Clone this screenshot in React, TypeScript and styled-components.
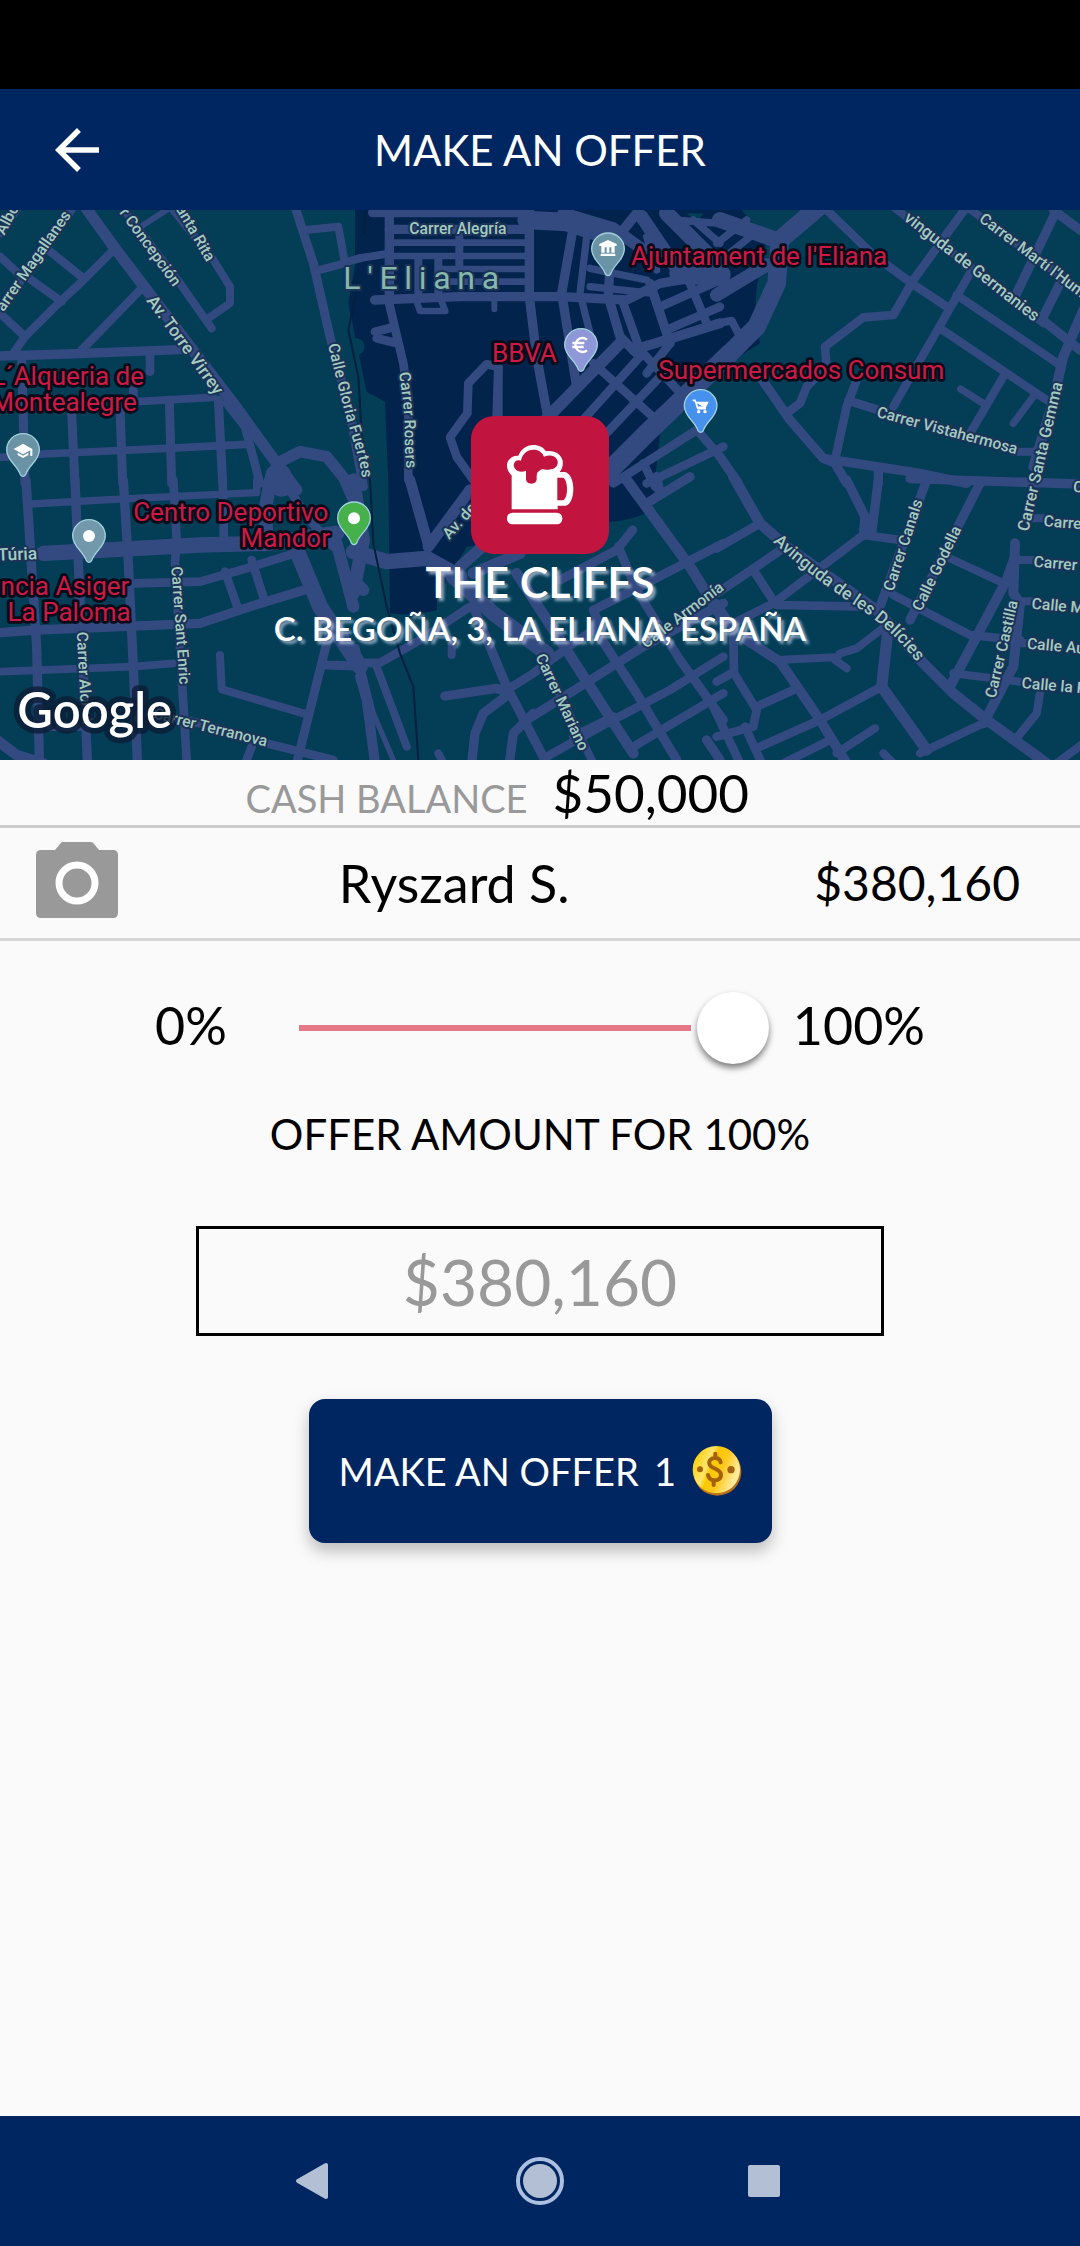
import React, { useState } from "react";
import styled, { createGlobalStyle } from "styled-components";

const NAVY = "#002661";
const PAPER = "#fafafa";
const CRIMSON = "#c1143e";
const UI_FONT = `Lato, "Open Sans", "Liberation Sans", sans-serif`;

const GlobalStyle = createGlobalStyle`
  *, *::before, *::after { box-sizing: border-box; }
  body { margin: 0; background: ${PAPER}; font-family: ${UI_FONT}; color: #000; }
  button, input { font-family: inherit; }
`;

const Screen = styled.div`
  display: flex;
  flex-direction: column;
  min-height: 100vh;
  background: ${PAPER};
`;

const StatusBar = styled.div`
  height: 89px;
  background: #000;
`;

const Header = styled.header`
  display: grid;
  grid-template-columns: 110px 1fr 110px;
  align-items: center;
  height: 121px;
  background: ${NAVY};
  color: #fff;
`;

const BackButton = styled.button`
  display: flex;
  justify-self: end;
  padding: 0;
  border: 0;
  background: none;
  color: inherit;
`;

const Title = styled.h1`
  margin: 0;
  font-size: 42px;
  line-height: 52px;
  font-weight: 400;
  text-align: center;
`;

const MapPanel = styled.section`
  display: grid;
  height: 550px;
  overflow: hidden;
  background: #033d56;

  > * {
    grid-area: 1 / 1;
    min-width: 0;
    min-height: 0;
  }
`;

const MapDrawing = styled.svg`
  display: block;
  width: 100%;
  height: 100%;
  font-family: Roboto, "Open Sans", sans-serif;
`;

const Place = styled.div`
  z-index: 1;
  display: flex;
  flex-direction: column;
  align-items: center;
  padding-top: 206px;
  color: #fff;
  text-align: center;
  text-shadow: 3px 3px 3px rgba(190, 205, 230, 0.75);
`;

const PlaceBadge = styled.div`
  display: flex;
  width: 138px;
  height: 138px;
  border-radius: 23px;
  background: ${CRIMSON};
`;

const PlaceName = styled.h2`
  margin: 0;
  font-size: 43px;
  line-height: 56px;
  font-weight: 600;
`;

const PlaceAddress = styled.p`
  margin: 0;
  font-size: 33px;
  line-height: 36px;
  font-weight: 600;
`;

const Balance = styled.dl`
  display: grid;
  grid-template-columns: 1fr 1fr;
  column-gap: 25px;
  align-items: baseline;
  margin: 0;
  height: 68px;
  border-bottom: 3px solid #cccccc;
`;

const BalanceLabel = styled.dt`
  font-size: 38px;
  color: #999;
  text-align: right;
`;

const BalanceValue = styled.dd`
  margin: 0;
  font-size: 53px;
  line-height: 66px;
`;

const PlayerRow = styled.div`
  display: grid;
  grid-template-columns: 82px 1fr auto;
  align-items: center;
  height: 113px;
  padding: 0 60px 0 36px;
  border-bottom: 3px solid #d6d6d6;
  font-size: 48px;
  line-height: 60px;
`;

const PhotoButton = styled.button`
  display: flex;
  padding: 0 0 6px;
  border: 0;
  background: none;
`;

const PlayerName = styled.span`
  padding-right: 24px;
  font-size: 52px;
  text-align: center;
`;

const OfferForm = styled.form`
  display: flex;
  flex-direction: column;
  align-items: center;
  padding: 51px 0 48px;
`;

const SliderRow = styled.div`
  display: grid;
  grid-template-columns: 144px 470px 156px;
  align-items: center;
  height: 72px;
  font-size: 52px;
  line-height: 66px;
`;

const SliderLimit = styled.span<{ $end?: boolean }>`
  padding-bottom: 6px;
  text-align: ${(p) => (p.$end ? "right" : "left")};
`;

const Slider = styled.input<{ $share: number }>`
  appearance: none;
  width: 100%;
  height: 72px;
  margin: 0;
  background: none;

  &::-webkit-slider-runnable-track {
    height: 6px;
    background: linear-gradient(#e57786, #e57786) no-repeat left center /
      calc((100% - 72px) * ${(p) => p.$share} - 6px) 6px;
  }

  &::-webkit-slider-thumb {
    appearance: none;
    width: 72px;
    height: 72px;
    margin-top: -33px;
    border-radius: 50%;
    background: #fff;
    box-shadow: 0 4px 6px rgba(0, 0, 0, 0.5);
  }
`;

const OfferLabel = styled.label`
  margin-top: 44px;
  font-size: 42px;
  line-height: 52px;
`;

const OfferInput = styled.input`
  width: 688px;
  max-width: 90%;
  height: 110px;
  margin-top: 66px;
  padding: 0;
  border: 3px solid #000;
  border-radius: 0;
  background: none;
  color: #999;
  font-size: 64px;
  line-height: 80px;
  text-align: center;
`;

const SubmitButton = styled.button`
  display: flex;
  align-items: center;
  justify-content: space-between;
  width: 463px;
  height: 144px;
  margin-top: 63px;
  padding: 0 30px;
  border: 0;
  border-radius: 16px;
  background: ${NAVY};
  color: #fff;
  font-size: 38px;
  line-height: 48px;
  box-shadow: 0 8px 16px rgba(0, 0, 0, 0.25);
`;

const SystemNav = styled.nav`
  display: flex;
  align-items: center;
  justify-content: center;
  gap: 152px;
  height: 130px;
  margin-top: auto;
  background: ${NAVY};
`;

const NavButton = styled.button`
  display: flex;
  padding: 0;
  border: 0;
  background: none;
`;

/* ---------- map data, three drawing units per pixel ---------- */

type Road = [path: string, width: number];

interface Tile {
  x: number;
  y: number;
  roads: Road[];
}

const tiles: Tile[] = [
  {
    x: 0,
    y: 600,
    roads: [
      ["M255 20L345 145L440 270L540 400L700 610L830 790L890 870", 34],
      ["M345 145L240 250L175 310L75 410L40 460", 25],
      ["M145 150L250 235M0 170L60 225M80 230L185 305M0 340L75 410", 25],
      ["M425 265L245 450", 25],
      ["M0 468L200 462L560 448", 28],
      ["M450 455V515", 26],
      ["M500 30L430 75", 18],
      ["M520 30L640 180L690 260V310L625 355M380 40L540 250L635 385", 24],
      ["M885 20L940 190L990 410L1050 640L1090 860", 27],
      ["M915 90L1015 80L1035 190L950 212M1030 188L1080 175", 24],
      ["M65 470L75 850M215 640L225 850M360 620L368 850M508 600L515 850M655 600L668 850", 27],
      ["M0 772L130 762L500 745L740 733M410 605L640 592", 23],
      ["M680 610L735 680L780 850M400 560V620", 26],
      ["M830 790L900 755L980 770L1045 850", 34],
      ["M835 830L845 850", 80],
      ["M215 30L100 190L0 330M50 30L0 100", 24],
    ],
  },
  {
    x: 1080,
    y: 600,
    roads: [
      ["M38 38H500M88 30V290M508 30V290L530 470L565 660", 28],
      ["M88 88H500", 28],
      ["M88 128H500M88 168H500M240 207H500M240 245H500", 20],
      ["M298 110V200M175 180V280M235 180V280", 24],
      ["M44 300L300 290H600L800 300L900 250L1080 220", 28],
      ["M170 305L180 333H256L245 305", 20],
      ["M403 300V328", 18],
      ["M-5 175L90 160", 24],
      ["M85 300L130 490L145 600V840M45 395L100 382M50 415L105 428", 26],
      ["M410 650L415 500L380 493L325 550L322 640L270 712L290 770L340 840", 26],
      ["M415 500V650", 26],
      ["M500 60L620 66L760 110", 56],
      ["M640 80L605 280L650 560", 28],
      ["M680 110L660 280L690 400", 22],
      ["M750 190L745 290L780 410L830 460", 28],
      ["M610 40L760 85L850 150", 36],
      ["M690 205L860 240M690 260L880 280", 22],
      ["M790 310L840 450L1000 620", 26],
      ["M830 40L790 90", 30],
      ["M845 50L960 220", 40],
      ["M920 40L1080 200", 46],
      ["M860 110L890 210M1000 60L1080 130M940 60L1080 70", 22],
      ["M960 220L1080 225", 64],
      ["M870 250L930 430", 28],
      ["M900 320L1080 240M920 390L1080 320M990 250L1040 370", 26],
      ["M820 450L1080 370", 30],
      ["M930 430L860 520", 26],
      ["M1110 460L860 700L740 820L520 1010", 58],
      ["M780 430L560 655", 36],
      ["M700 490L900 670M840 470L660 670M900 530L720 720", 26],
      ["M1010 690L760 850M1020 700L1080 770M1090 740L860 850M850 790L885 860", 26],
    ],
  },
  {
    x: 2160,
    y: 600,
    roads: [
      ["M320 0L180 120L170 250L110 380L-10 500", 56],
      ["M0 60L170 120", 48],
      ["M-10 130L80 60M-10 190L110 95", 22],
      ["M-10 285L140 195", 40],
      ["M-10 370L35 362L60 410", 24],
      ["M320 30L460 165L575 250L680 320", 26],
      ["M740 20L580 240L520 345L430 352L315 440L320 500L260 560L240 610L200 640", 26],
      ["M750 220L520 620", 25],
      ["M710 285L1020 495M660 385L980 600M850 530L750 700", 25],
      ["M722 567L790 610M940 590L880 670", 22],
      ["M1010 30L890 280M1000 30L1080 90M1020 250L970 350M955 350L1080 450", 28],
      ["M1090 330L1030 470L1000 600L940 800", 30],
      ["M120 530L210 660L310 775L345 790L380 850", 28],
      ["M310 775L600 820L740 850", 28],
      ["M0 770L55 850M475 810V850", 28],
      ["M410 540L380 620L345 780M385 602L475 630", 26],
      ["M880 755H950", 24],
      ["M520 20L750 200L970 370M740 20L1080 270", 24],
    ],
  },
  {
    x: 0,
    y: 1440,
    roads: [
      ["M78 0L110 500L118 840M225 0L235 250L262 840M370 0L385 250L400 560L412 840", 28],
      ["M520 0L530 180L525 250L560 840M668 0L672 190", 26],
      ["M90 72L400 55L770 38V0", 22],
      ["M130 220L600 195L800 190L1010 160", 46],
      ["M400 310L600 305L740 265L900 215", 26],
      ["M0 458L110 450L600 430L750 380L930 325", 28],
      ["M0 575L400 560L520 550", 23],
      ["M675 275L712 380M755 240L790 350", 26],
      ["M812 0L795 90L800 160", 40],
      ["M850 0L920 110L1000 200", 26],
      ["M890 210L960 380L1080 560", 48],
      ["M1010 190L1060 380M1035 0L1080 100M1050 290L1090 330", 36],
      ["M985 470L890 850M980 555L1070 558", 27],
      ["M660 525L665 628L910 700", 24],
      ["M-10 780L50 825L130 850", 32],
      ["M400 690L600 730L800 790L1000 840M755 800L740 840M150 740H240", 26],
    ],
  },
  {
    x: 1080,
    y: 1440,
    roads: [
      ["M800 0L990 260L1090 420", 32],
      ["M860 70L990 -10M890 -10L900 40", 28],
      ["M1090 190L820 330L700 390L720 440M818 150L770 210L600 300", 27],
      ["M775 200L830 330L960 540L1090 720", 27],
      ["M340 380L440 620L560 850", 28],
      ["M470 280L600 480L820 820", 32],
      ["M440 630L520 580L640 490L700 450", 26],
      ["M500 720L660 620L850 500L1090 370", 28],
      ["M560 830L740 730L930 630L1090 530M820 800L1090 640M640 770L760 710", 26],
      ["M700 440L830 640L950 840M1040 780L1080 840", 28],
      ["M255 648L410 625L450 640L370 700L345 760L335 850", 28],
      ["M520 700L460 760L448 850", 28],
      ["M150 0L205 195", 32],
      ["M-20 215L80 245L200 235L300 290", 46],
      ["M280 290L400 400L560 520", 46],
      ["M205 200L330 30M300 260L390 180M340 280L480 220", 34],
      ["M-20 550L60 548L180 480L330 380", 26],
      ["M50 560L140 800M275 480V525M235 820L250 850", 24],
      ["M0 590L20 660L45 850", 30],
      ["M-10 500L40 700L100 840", 16],
      ["M-20 0L10 180L-20 340", 40],
      ["M540 520L700 850", 24],
    ],
  },
  {
    x: 2160,
    y: 1440,
    roads: [
      ["M40 -10L120 130L200 200L470 390L610 550L700 640L800 720L980 850", 32],
      ["M120 130L-10 205M190 205L50 300L-10 340M100 270L165 370", 27],
      ["M380 0L435 110L430 165M475 0L455 160", 28],
      ["M430 165L540 180M430 165L160 370L40 430M170 375L440 380", 26],
      ["M620 0L480 380M570 -4L1080 12M780 10L570 420", 28],
      ["M520 345L750 465L900 480", 26],
      ["M690 235L840 305", 24],
      ["M885 230L860 300L690 620", 30],
      ["M885 190L880 340L900 370L880 560L790 730", 30],
      ["M885 240H940M890 364H940M920 115H970M890 490H930", 24],
      ["M700 580L900 605", 24],
      ["M505 440L485 620L620 810", 34],
      ["M495 440L410 505L360 520L345 540L380 565M345 532L170 540", 24],
      ["M485 620L300 720L120 800", 26],
      ["M80 480L180 545L300 720L380 850", 30],
      ["M40 470L42 580L110 690L100 740L-10 770M-10 605L42 575M110 680L220 630", 26],
      ["M190 850L330 780M350 820L465 745M600 820L790 730M490 820L520 850", 25],
      ["M960 640L950 700L885 780M1090 790L1010 850", 25],
      ["M-20 680L60 850M75 740L125 850", 26],
      ["M-10 370L50 460", 24],
    ],
  },
];

interface StreetLabel {
  text: string;
  x: number;
  y: number;
  angle: number;
  end?: boolean;
  size?: number;
}

const streets: StreetLabel[] = [
  { text: "Albo", x: 58, y: 622, angle: -62, end: true },
  { text: "arrer Magallanes", x: 214, y: 646, angle: -55, end: true },
  { text: "r Concepción", x: 520, y: 862, angle: 54, end: true },
  { text: "anta Rita", x: 620, y: 788, angle: 60, end: true },
  { text: "Av. Torre Virrey", x: 438, y: 902, angle: 54, size: 52 },
  { text: "Carrer Alegría", x: 1228, y: 702, angle: 0 },
  { text: "vinguda de Germanies", x: 3102, y: 966, angle: 38, end: true, size: 50 },
  { text: "Carrer Martí l'Hum", x: 2935, y: 662, angle: 37 },
  { text: "Carrer Vistahermosa", x: 2628, y: 1250, angle: 15 },
  { text: "Carrer Santa Gemma", x: 3188, y: 1150, angle: -77, end: true, size: 49 },
  { text: "Túria", x: -6, y: 1682, angle: -2, size: 52 },
  { text: "Carrer Sant Enric", x: 514, y: 1700, angle: 86 },
  { text: "Carrer Alomà", x: 230, y: 1896, angle: 87 },
  { text: "Carrer Terranova", x: 798, y: 2240, angle: 14, end: true },
  { text: "Av. de l", x: 1348, y: 1620, angle: -48 },
  { text: "Calle Armonía", x: 1938, y: 1946, angle: -37 },
  { text: "Carrer Mariano", x: 1606, y: 1970, angle: 65 },
  { text: "Carrer Canals", x: 2680, y: 1776, angle: -72 },
  { text: "Calle Godella", x: 2764, y: 1836, angle: -64 },
  { text: "Carrer Castilla", x: 3054, y: 1805, angle: -77, end: true },
  { text: "C", x: 3218, y: 1475, angle: 5 },
  { text: "Carre", x: 3130, y: 1578, angle: 5 },
  { text: "Carrer", x: 3100, y: 1700, angle: 5 },
  { text: "Calle M", x: 3094, y: 1826, angle: 5 },
  { text: "Calle Au", x: 3080, y: 1946, angle: 5 },
  { text: "Calle la P", x: 3064, y: 2064, angle: 5 },
];

interface Venue {
  text: string;
  x: number;
  y: number;
  end?: boolean;
}

const venues: Venue[] = [
  { text: "L´Alqueria de", x: 432, y: 1155, end: true },
  { text: "Montealegre", x: 410, y: 1232, end: true },
  { text: "Centro Deportivo", x: 985, y: 1562, end: true },
  { text: "Mandor", x: 990, y: 1640, end: true },
  { text: "ncia Asiger", x: 388, y: 1785, end: true },
  { text: "La Paloma", x: 392, y: 1862, end: true },
  { text: "Ajuntament de l'Eliana", x: 1893, y: 795 },
  { text: "BBVA", x: 1476, y: 1085 },
  { text: "Supermercados Consum", x: 1975, y: 1138 },
];

const Pin = ({ x, y, color, children }: { x: number; y: number; color: string; children: React.ReactNode }) => (
  <g transform={`translate(${x} ${y})`}>
    <path
      d="M0 -49A49 49 0 0 1 49 0C49 32 16 46 8 74Q0 84 -8 74C-16 46 -49 32 -49 0A49 49 0 0 1 0 -49Z"
      fill={color}
      stroke="#9fd0dc"
      strokeWidth="4"
    />
    {children}
  </g>
);

const StreetMap = () => (
  <MapDrawing viewBox="0 630 3240 1650" preserveAspectRatio="xMidYMid slice" role="img" aria-label="Map of L'Eliana">
    <rect x="-2000" y="0" width="7240" height="3000" fill="#033d56" />
    <path
      d="M1065 600H2200L2300 720L2270 860L2265 950L2280 1030L2200 1080L2060 1170L1980 1300L1955 1530Q1900 1562 1830 1565L1400 1640L1312 1790L1310 1830Q1240 1850 1170 1840L1165 1440L1155 1205L1100 1175L1080 1080L1045 910L1065 800Z"
      fill="#02234c"
    />
    <path d="M2060 640h50l-20 30z" fill="#033d56" />
    <circle cx="1068" cy="1040" r="26" fill="#033d56" />
    {tiles.map((tile) => (
      <g
        key={`${tile.x}-${tile.y}`}
        transform={`translate(${tile.x} ${tile.y})`}
        fill="none"
        stroke="#334a80"
        strokeLinecap="round"
        strokeLinejoin="round"
      >
        {tile.roads.map(([d, width]) => (
          <path key={d} d={d} strokeWidth={width} />
        ))}
      </g>
    ))}
    <path
      d="M1095 600L1092 700M1068 880L1045 990L1075 1130L1085 1300L1110 1440L1120 1630L1160 1820L1200 1960L1240 2060L1255 2280"
      fill="none"
      stroke="#03203f"
      strokeWidth="6"
    />
    <g fill="#a3cbc0" stroke="#1b3357" strokeWidth="12" strokeLinejoin="round" paintOrder="stroke" fontWeight="500">
      {streets.map((s) => (
        <text
          key={`${s.text}${s.x}`}
          transform={`translate(${s.x} ${s.y}) rotate(${s.angle})`}
          fontSize={s.size ?? 47}
          textAnchor={s.end ? "end" : "start"}
        >
          {s.text}
        </text>
      ))}
      <path id="gloria" d="M984 1034Q1030 1230 1062 1330T1085 1480" fill="none" stroke="none" />
      <text fontSize="47">
        <textPath href="#gloria">Calle Gloria Fuertes</textPath>
      </text>
      <path id="rosers" d="M1197 1118Q1215 1230 1214 1300T1228 1480" fill="none" stroke="none" />
      <text fontSize="47">
        <textPath href="#rosers">Carrer Rosers</textPath>
      </text>
      <path id="delicies" d="M2318 1626Q2440 1736 2570 1820T2780 2030" fill="none" stroke="none" />
      <text fontSize="52">
        <textPath href="#delicies">Avinguda de les Delícies</textPath>
      </text>
      <text x="1030" y="868" fontSize="96" letterSpacing="20" fill="#86b8ab" fontWeight="400">
        L'Eliana
      </text>
    </g>
    <g fill="#cd1a44" stroke="#0a0a18" strokeWidth="16" strokeLinejoin="round" paintOrder="stroke" fontSize="78">
      {venues.map((v) => (
        <text key={v.text} x={v.x} y={v.y} textAnchor={v.end ? "end" : "start"}>
          {v.text}
        </text>
      ))}
    </g>
    <Pin x={69} y={1350} color="#6a94a6">
      <path d="M-28 -3L0 -19L28 -3V18H22V1L0 13ZM-16 8L0 17L16 8V15L0 24L-16 15Z" fill="#fff" />
    </Pin>
    <Pin x={267} y={1608} color="#7198ab">
      <circle r="18" fill="#fff" />
    </Pin>
    <Pin x={1062} y={1555} color="#46b04b">
      <circle r="18" fill="#fff" />
    </Pin>
    <Pin x={1824} y={748} color="#6a94a6">
      <path d="M0 -28L26 -16V-10H20V10H10V-6H4V10H-4V-6H-10V10H-20V-10H-26V-16ZM-22 13H22V20H-22Z" fill="#fff" />
    </Pin>
    <Pin x={1743} y={1035} color="#8e97d8">
      <path d="M18 -16A21 21 0 1 0 18 16M-26 -6H10M-26 6H8" fill="none" stroke="#fff" strokeWidth="7" />
    </Pin>
    <Pin x={2102} y={1218} color="#4690ee">
      <path d="M-24 -17H-17L-8 8H16M-14 -10H20L13 4H-10Z" fill="#fff" stroke="#fff" strokeWidth="5" />
      <circle cx="-6" cy="17" r="5" fill="#fff" />
      <circle cx="13" cy="17" r="5" fill="#fff" />
    </Pin>
    <text
      x="52"
      y="2184"
      fontSize="147"
      fontWeight="600"
      fontFamily="Lato, sans-serif"
      fill="#fff"
      stroke="#0b1d36"
      strokeOpacity="0.8"
      strokeWidth="34"
      strokeLinejoin="round"
      paintOrder="stroke"
    >
      Google
    </text>
  </MapDrawing>
);

const BeerMug = () => (
  <svg width="138" height="138" viewBox="18 18 414 414" aria-hidden="true">
    <path
      d="M140 298V196C126 184 122 164 130 152C136 142 148 136 160 137C168 118 184 105 205 105C222 105 236 112 243 124C268 120 288 132 293 152C295 166 291 178 284 186H300C316 190 325 212 325 236C325 262 316 284 302 287H278V298Z"
      fill="#fff"
    />
    <path
      d="M146 166C147 154 156 148 168 152C172 132 186 119 205 119C222 119 232 127 237 140C256 132 274 138 278 154C280 170 268 178 252 179C238 180 230 175 226 180C219 185 215 188 215 198V208C215 216 208 221 200 221C190 221 183 215 183 207V182C166 190 148 182 146 166Z"
      fill={CRIMSON}
    />
    <path d="M277 203H294C302 206 306 222 306 238C306 254 302 268 294 271H277Z" fill={CRIMSON} />
    <rect x="126" y="308" width="166" height="35" rx="16" fill="#fff" />
  </svg>
);

const BackArrow = () => (
  <svg width="66" height="66" viewBox="0 0 24 24" fill="currentColor" aria-hidden="true">
    <path d="M20 11H7.83l5.59-5.59L12 4l-8 8 8 8 1.41-1.41L7.83 13H20v-2z" />
  </svg>
);

const CameraIcon = () => (
  <svg width="82" height="76" viewBox="0 0 82 76" aria-hidden="true">
    <path
      d="M27 0H55Q57 0 58 2L63 8H77Q82 8 82 13V71Q82 76 77 76H5Q0 76 0 71V13Q0 8 5 8H19L24 2Q25 0 27 0Z"
      fill="#999"
    />
    <circle cx="41" cy="41" r="18" fill="none" stroke="#fff" strokeWidth="7" />
  </svg>
);

const Coin = () => (
  <svg width="50" height="52" viewBox="0 0 150 156" aria-hidden="true">
    <defs>
      <linearGradient id="gold" x1="0" y1="0" x2="1" y2="0.4">
        <stop offset="0.1" stopColor="#fad000" />
        <stop offset="0.4" stopColor="#ffe56e" />
        <stop offset="0.5" stopColor="#fcc800" />
        <stop offset="0.7" stopColor="#fdc81a" />
        <stop offset="1" stopColor="#ffeb9a" />
      </linearGradient>
    </defs>
    <circle cx="76" cy="80" r="72" fill="#b8701c" />
    <circle cx="73" cy="74" r="71" fill="url(#gold)" />
    <circle cx="24" cy="73" r="9" fill="#a5620c" />
    <circle cx="117" cy="74" r="11" fill="#a5620c" />
    <path
      d="M86 52C84 42 76 39 69 39C58 39 50 46 52 56C54 72 87 70 87 90C87 101 77 107 66 106C56 105 50 99 48 90M70 26V39M65 106V120"
      fill="none"
      stroke="#a5620c"
      strokeWidth="12"
      strokeLinecap="round"
    />
  </svg>
);

const MAX_OFFER = 380160;
const dollars = (n: number) => "$" + Math.round(n).toLocaleString("en-US");

export default function App() {
  const [percent, setPercent] = useState(100);

  return (
    <>
      <GlobalStyle />
      <Screen>
        <StatusBar />
        <Header>
          <BackButton type="button" aria-label="Back">
            <BackArrow />
          </BackButton>
          <Title>MAKE AN OFFER</Title>
        </Header>

        <MapPanel>
          <StreetMap />
          <Place>
            <PlaceBadge>
              <BeerMug />
            </PlaceBadge>
            <PlaceName>THE CLIFFS</PlaceName>
            <PlaceAddress>C. BEGOÑA, 3, LA ELIANA, ESPAÑA</PlaceAddress>
          </Place>
        </MapPanel>

        <Balance>
          <BalanceLabel>CASH BALANCE</BalanceLabel>
          <BalanceValue>$50,000</BalanceValue>
        </Balance>

        <PlayerRow>
          <PhotoButton type="button" aria-label="Photo">
            <CameraIcon />
          </PhotoButton>
          <PlayerName>Ryszard S.</PlayerName>
          <span>{dollars(MAX_OFFER)}</span>
        </PlayerRow>

        <OfferForm onSubmit={(e) => e.preventDefault()}>
          <SliderRow>
            <SliderLimit>0%</SliderLimit>
            <Slider
              type="range"
              min={0}
              max={100}
              value={percent}
              aria-label="Offer percentage"
              $share={percent / 100}
              onChange={(e) => setPercent(Number(e.target.value))}
            />
            <SliderLimit $end>100%</SliderLimit>
          </SliderRow>
          <OfferLabel htmlFor="amount">OFFER AMOUNT FOR {percent}%</OfferLabel>
          <OfferInput id="amount" readOnly value={dollars((MAX_OFFER * percent) / 100)} />
          <SubmitButton type="submit">
            <span>MAKE AN OFFER</span>
            <span>1</span>
            <Coin />
          </SubmitButton>
        </OfferForm>

        <SystemNav aria-label="System">
          <NavButton type="button" aria-label="Go back">
            <svg width="72" height="72" viewBox="0 0 72 72" fill="#b2bfd4" stroke="#b2bfd4" strokeLinejoin="round">
              <path d="M18 36L46 20V52Z" strokeWidth="4" />
            </svg>
          </NavButton>
          <NavButton type="button" aria-label="Home">
            <svg width="72" height="72" viewBox="0 0 72 72">
              <circle cx="36" cy="36" r="22" fill="none" stroke="#acbfe0" strokeWidth="4" />
              <circle cx="36" cy="36" r="17" fill="#b2bfd4" />
            </svg>
          </NavButton>
          <NavButton type="button" aria-label="Recent apps">
            <svg width="72" height="72" viewBox="0 0 72 72">
              <rect x="20" y="20" width="32" height="32" rx="2" fill="#b2bfd4" />
            </svg>
          </NavButton>
        </SystemNav>
      </Screen>
    </>
  );
}
